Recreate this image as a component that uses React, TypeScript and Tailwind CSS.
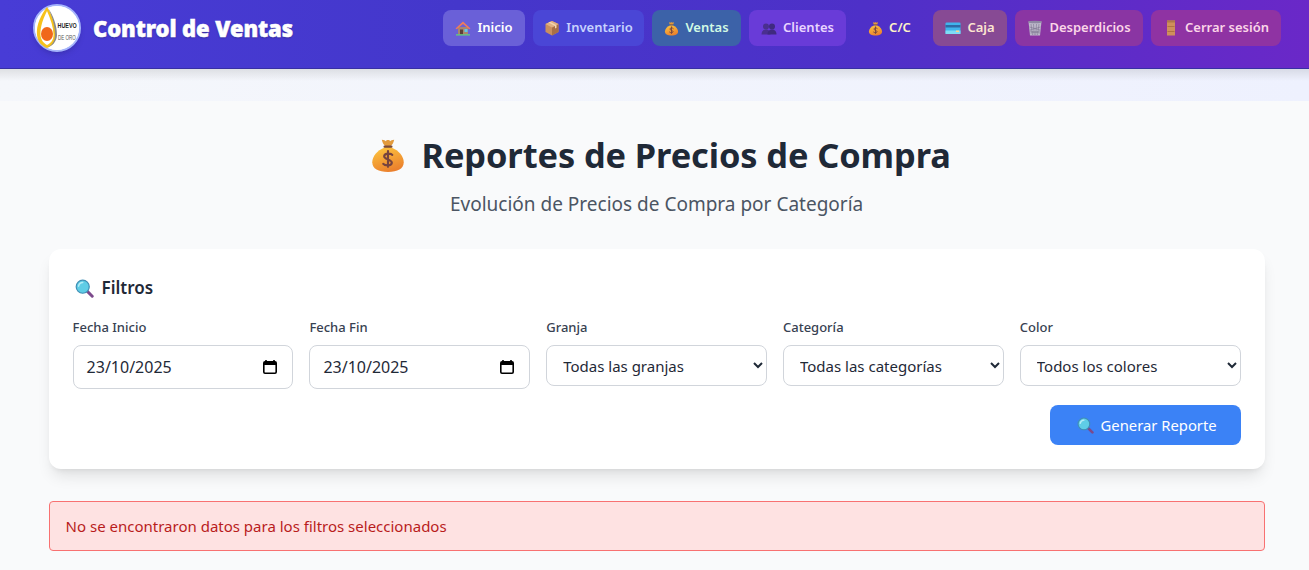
import React from "react";

const FONT = "font-['Noto_Sans','Open_Sans',sans-serif]";

function MoneyBag({ size = 16 }: { size?: number }) {
  return (
    <svg width={size} height={size} viewBox="0 0 32 32" className="shrink-0">
      <defs>
        <linearGradient id="bag" x1="0.25" y1="0" x2="0.65" y2="1">
          <stop offset="0" stopColor="#fcc23e" />
          <stop offset="1" stopColor="#ea7d2c" />
        </linearGradient>
      </defs>
      <path d="M10.500 2.500c2 .2 3 .6 3.500 1.300.6-1.400 3.400-1.400 4 0 .5-.7 1.500-1.100 3.500-1.300-.6 2.300-1.500 4.500-3 5.500h-5c-1.500-1-2.400-3.200-3-5.500z" fill="#e29a3c" />
      <rect x="12" y="7.500" width="8" height="2.200" rx="1" fill="#7a4a3a" />
      <path d="M12.500 9.500C6.500 12 2 17 2 22.500 2 28.500 7.500 31 16 31s14-2.500 14-8.500c0-5.500-4.500-10.500-10.500-13z" fill="url(#bag)" />
      <path d="M19.800 15.800c-1-1.400-6.800-1.800-7.200 1.200s7.200 2.800 6.800 6-6.400 2.400-7.600 .8M16 12.500v14" fill="none" stroke="#75433f" strokeWidth="1.900" strokeLinecap="round" />
    </svg>
  );
}

function House() {
  return (
    <svg width="16" height="16" viewBox="0 0 32 32" className="shrink-0">
      <rect x="6" y="14" width="20" height="15" fill="#a9866e" />
      <rect x="10" y="19" width="6" height="10" fill="#5d4037" />
      <rect x="19" y="18" width="6" height="6" fill="#5ec8ea" />
      <path d="M1 17L16 3l15 14-2.500 1.500L16 8 3.500 18.500z" fill="#ef7b5b" />
      <rect x="2" y="28.500" width="28" height="2.500" fill="#62d277" />
    </svg>
  );
}

function Box() {
  return (
    <svg width="16" height="16" viewBox="0 0 32 32" className="shrink-0">
      <path d="M16 2l13 6v16l-13 7-13-7V8z" fill="#c98f5f" />
      <path d="M16 15v16l13-7V8z" fill="#a86f47" />
      <path d="M16 2l13 6-13 7L3 8z" fill="#e0b083" />
      <path d="M9 5l13 7v5l3-1.500v-5L12 3.500z" fill="#f2d5b0" />
    </svg>
  );
}

function Busts() {
  return (
    <svg width="16" height="16" viewBox="0 0 32 32" className="shrink-0">
      <circle cx="10" cy="13" r="6" fill="#4a2f8f" />
      <path d="M1 29c0-7 4-10 9-10s9 3 9 10z" fill="#4a2f8f" />
      <circle cx="22" cy="13" r="6" fill="#3f2a80" />
      <path d="M13 29c0-7 4-10 9-10s9 3 9 10z" fill="#3f2a80" />
    </svg>
  );
}

function Card() {
  return (
    <svg width="16" height="16" viewBox="0 0 32 32" className="shrink-0">
      <rect x="1" y="5" width="30" height="23" rx="2" fill="#3fb4ec" />
      <rect x="1" y="10" width="30" height="5" fill="#2d6aa6" />
      <rect x="1" y="21" width="30" height="7" fill="#7edcf5" />
      <rect x="22" y="21" width="6" height="3" fill="#fbd38d" />
    </svg>
  );
}

function Trash() {
  return (
    <svg width="16" height="16" viewBox="0 0 32 32" className="shrink-0">
      <path d="M3 3h26l-3 28H6z" fill="#bdb8ca" />
      <ellipse cx="16" cy="4" rx="14" ry="2.500" fill="#8e88a3" />
      <path d="M8 8l3 22M13 8l1.500 22M19 8l-1.500 22M24 8l-3 22M5 14l21 6M27 14L6 20M6 22l20 4M26 22L7 26" stroke="#7d7690" strokeWidth="1.200" fill="none" />
    </svg>
  );
}

function Door() {
  return (
    <svg width="16" height="16" viewBox="0 0 32 32" className="shrink-0">
      <rect x="8" y="1" width="16" height="30" fill="#cf8f5c" />
      <rect x="8" y="1" width="16" height="4" fill="#b0784a" />
      <path d="M9 13h14M9 23h14" stroke="#a56a3a" strokeWidth="1.500" />
    </svg>
  );
}

function Lens({ size = 16 }: { size?: number }) {
  return (
    <svg width={size} height={size} viewBox="0 0 32 32" className="shrink-0">
      <path d="M20 20l9 9" stroke="#7c4a8c" strokeWidth="5" strokeLinecap="round" />
      <circle cx="13" cy="13" r="11" fill="#5fcde6" stroke="#3f8fb5" strokeWidth="2" />
      <path d="M6 12c1-4 4-6 7-6" stroke="#b6ecf7" strokeWidth="2.500" fill="none" strokeLinecap="round" />
    </svg>
  );
}

function Logo() {
  return (
    <div className="w-12 h-12 rounded-full bg-white border-2 border-[#a5b4fc] shrink-0 shadow-md">
      <svg viewBox="0 0 44 44" width="44" height="44">
        <circle cx="22" cy="22" r="22" fill="#fff" />
        <path d="M12 1C6 9 1 19 2 29c.6 7 5 11 10 13 5-2 9-6 9-13 0-10-4-20-9-28z" fill="#f6c21c" />
        <path d="M13 2c4 8 7 17 7 27 0 6-3 10-7 12 3 0 9-5 9-12C22 19 18 9 13 2z" fill="#8a8a8a" />
        <path d="M12 5C8 13 5 21 5.500 29c.4 5 3 8 6.500 10 4-2 6.500-5 6.500-10 0-8-3-16-6.500-24z" fill="#fff" />
        <ellipse cx="12" cy="28" rx="6" ry="7" fill="#f0681a" />
        <text transform="translate(22.500 22) scale(1 1.500)" fontSize="5.400" fontWeight="700" fill="#1f1f1f" fontFamily="Liberation Sans, sans-serif">HUEVO</text>
        <text transform="translate(23 34) scale(1 1.700)" fontSize="4.500" fill="#555" fontFamily="Liberation Sans, sans-serif">DE ORO</text>
      </svg>
    </div>
  );
}

const nav = [
  { label: "Inicio", icon: <House />, cls: "bg-[#6a60d8] text-white w-[82px]" },
  { label: "Inventario", icon: <Box />, cls: "bg-[#4a46d6] text-[#c7d2fe] w-[111px]" },
  { label: "Ventas", icon: <MoneyBag size={15} />, cls: "bg-[#3c62a8] text-[#d1fae5] w-[89px]" },
  { label: "Clientes", icon: <Busts />, cls: "bg-[#693bd8] text-[#e9d5ff] w-[97px]" },
  { label: "C/C", icon: <MoneyBag size={15} />, cls: "text-[#fef3c7] w-[71px]" },
  { label: "Caja", icon: <Card />, cls: "bg-[#874a94] text-[#fde6d0] w-[74px]" },
  { label: "Desperdicios", icon: <Trash />, cls: "bg-[#8a35a3] text-[#fbd5e8] w-[128px]" },
  { label: "Cerrar sesión", icon: <Door />, cls: "bg-[#8f33a3] text-[#fbd5e8] w-[130px]" },
];

function Field({ label, children }: { label: string; children: React.ReactNode }) {
  return (
    <div className="flex flex-col">
      <label className="text-[13px] leading-5 font-medium text-[#374151] mb-2">{label}</label>
      {children}
    </div>
  );
}

function DateBox() {
  return (
    <div className="h-11 rounded-lg border border-[#d1d5db] bg-white flex items-center justify-between pl-[13px] pr-[14px] text-[16px] text-[#1f2937]">
      <span>23/10/2025</span>
      <svg width="16" height="16" viewBox="0 0 16 16">
        <path d="M4 1v2M12 1v2" stroke="#000" strokeWidth="1.600" />
        <rect x="1.800" y="2.800" width="12.400" height="11.400" rx="1.200" fill="none" stroke="#000" strokeWidth="1.600" />
        <rect x="2" y="3" width="12" height="3" fill="#000" />
      </svg>
    </div>
  );
}

function Select({ text }: { text: string }) {
  return (
    <select className="h-[41px] w-full rounded-lg border border-[#d1d5db] bg-white px-3 text-[15px] text-[#1f2937]" defaultValue={text}>
      <option>{text}</option>
    </select>
  );
}

export default function App() {
  return (
    <div className={`${FONT} min-h-[570px] bg-[#f9fafb] overflow-hidden`}>
      <header className="h-[69px] bg-[linear-gradient(90deg,#483cd6_0%,#4437cb_35%,#4e30c8_66%,#6a28c8_100%)] border-b border-[#3730a3] flex items-start justify-between pl-[33px] pr-7 pt-[4px]">
        <div className="flex items-center gap-3">
          <Logo />
          <span className="text-[22px] leading-[48px] font-black text-white tracking-[-0.1px] [-webkit-text-stroke:0.5px_white] [text-shadow:0_1px_2px_rgba(0,0,0,0.3)]">Control de Ventas</span>
        </div>
        <nav className="flex gap-2 mt-[6px]">
          {nav.map((n) => (
            <a key={n.label} className={`h-9 rounded-lg flex items-center justify-center gap-[6px] text-[13px] font-semibold whitespace-nowrap ${n.cls}`}>
              {n.icon}
              {n.label}
            </a>
          ))}
        </nav>
      </header>
      <div className="h-8 bg-gradient-to-r from-[#f5f7fb] to-[#eef1fe]">
        <div className="h-3 bg-gradient-to-b from-[#00000018] to-transparent" />
      </div>
      <main className="ml-[48.6px] w-[1216px]">
        <div className="pt-[29px] pb-[31px] pl-[8px]">
          <h1 className="flex items-center justify-center gap-[15px] text-[34.400px] leading-[50px] font-bold text-[#1f2937] tracking-[-0.1px]">
            <MoneyBag size={36} />
            Reportes de Precios de Compra
          </h1>
          <p className="text-center text-[19px] leading-7 text-[#4b5563] mt-[10px] -ml-[8px]">Evolución de Precios de Compra por Categoría</p>
        </div>
        <section className="bg-white rounded-xl shadow-lg px-6 pt-[25px] h-[220px]">
          <h2 className="flex items-center gap-2 text-[17px] leading-7 font-semibold text-[#1f2937] ml-[2px]">
            <Lens size={19} />
            Filtros
          </h2>
          <div className="grid grid-cols-5 gap-4 mt-[15px]">
            <Field label="Fecha Inicio"><DateBox /></Field>
            <Field label="Fecha Fin"><DateBox /></Field>
            <Field label="Granja"><Select text="Todas las granjas" /></Field>
            <Field label="Categoría"><Select text="Todas las categorías" /></Field>
            <Field label="Color"><Select text="Todos los colores" /></Field>
          </div>
          <div className="flex justify-end mt-4">
            <button className="h-10 w-[191px] rounded-lg bg-[#3b82f6] text-white text-[14.800px] flex items-center justify-center gap-[7px] pl-[3px]">
              <Lens size={17} />
              Generar Reporte
            </button>
          </div>
        </section>
        <div className="mt-8 h-[50px] flex items-center bg-[#fee2e2] border border-[#f87171] rounded px-4 text-[15px] text-[#b91c1c]">
          No se encontraron datos para los filtros seleccionados
        </div>
      </main>
    </div>
  );
}
